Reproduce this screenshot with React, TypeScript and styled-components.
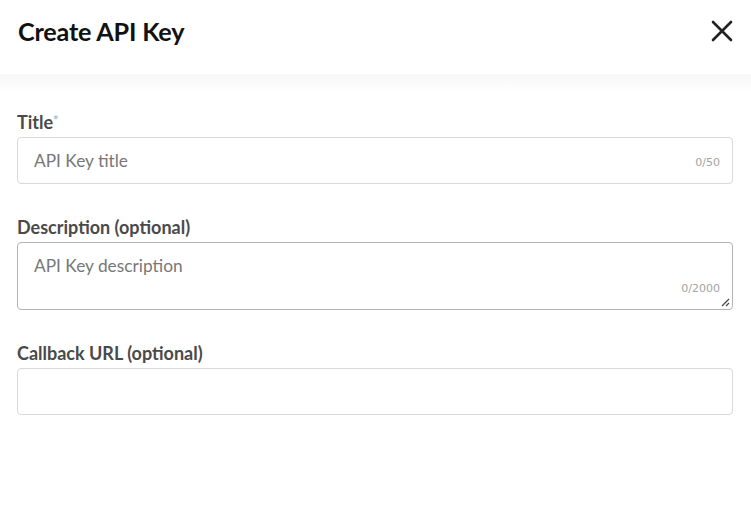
import React from "react";
import styled, { createGlobalStyle } from "styled-components";

const Global = createGlobalStyle`
  html, body { margin: 0; padding: 0; background: #fff; }
  body { font-family: Lato, "Open Sans", sans-serif; }
  * { box-sizing: border-box; }
`;

const Panel = styled.div`
  width: 751px;
  height: 513px;
  background: #fff;
  display: flex;
  flex-direction: column;
`;

const Header = styled.header`
  height: 74px;
  display: flex;
  align-items: center;
  justify-content: space-between;
  padding: 0 17px 0 18px;
  position: relative;
  &::after {
    content: "";
    position: absolute;
    left: 0;
    right: 0;
    top: 74px;
    height: 18px;
    background: linear-gradient(#f7f7f7, #ffffff);
  }
`;

const Heading = styled.h1`
  margin: 0;
  margin-top: -13px;
  font-size: 25.2px;
  font-weight: 700;
  color: #111;
  letter-spacing: -0.2px;
`;

const CloseButton = styled.button`
  border: 0;
  background: transparent;
  padding: 0;
  width: 24px;
  height: 24px;
  margin-top: -13px;
  display: flex;
  align-items: center;
  justify-content: center;
  cursor: pointer;
`;

const Form = styled.form`
  display: flex;
  flex-direction: column;
  gap: 32px;
  padding: 37px 18px 0 17px;
`;

const Field = styled.div`
  display: flex;
  flex-direction: column;
  gap: 4px;
`;

const Label = styled.label`
  font-size: 18px;
  font-weight: 700;
  color: #4a4a4a;
  line-height: 22px;
`;

const Required = styled.span`
  color: #a9b8c4;
  font-size: 13px;
  vertical-align: top;
  position: relative;
  top: -2px;
`;

const Box = styled.div<{ $multi?: boolean; $strong?: boolean }>`
  position: relative;
  height: ${(p) => (p.$multi ? "68px" : "47px")};
  border: 1px solid ${(p) => (p.$strong ? "#b3b3b3" : "#d9d9d9")};
  border-radius: 4px;
  display: flex;
  align-items: ${(p) => (p.$multi ? "flex-start" : "center")};
  padding: ${(p) => (p.$multi ? "13px 16px" : "0 16px")};
`;

const Placeholder = styled.span`
  font-size: 17.3px;
  color: #777;
  line-height: 20px;
`;

const Counter = styled.span`
  position: absolute;
  right: 12px;
  bottom: 14px;
  font-family: "DejaVu Sans", Verdana, sans-serif;
  font-size: 11px;
  color: #a3a3a3;
`;

const Grip = styled.svg`
  position: absolute;
  right: 2px;
  bottom: 2px;
`;

export default function App() {
  return (
    <Panel>
      <Global />
      <Header>
        <Heading>Create API Key</Heading>
        <CloseButton aria-label="Close">
          <svg width="22" height="22" viewBox="0 0 22 22">
            <path d="M2 2L20 20M20 2L2 20" stroke="#222" strokeWidth="2.6" strokeLinecap="round" />
          </svg>
        </CloseButton>
      </Header>
      <Form>
        <Field>
          <Label>
            Title<Required>*</Required>
          </Label>
          <Box>
            <Placeholder>API Key title</Placeholder>
            <Counter>0/50</Counter>
          </Box>
        </Field>
        <Field>
          <Label>Description (optional)</Label>
          <Box $multi $strong>
            <Placeholder>API Key description</Placeholder>
            <Counter>0/2000</Counter>
            <Grip width="9" height="9" viewBox="0 0 9 9">
              <path d="M8 1L1 8M8 5L5 8" stroke="#444" strokeWidth="1.2" />
            </Grip>
          </Box>
        </Field>
        <Field>
          <Label>Callback URL (optional)</Label>
          <Box />
        </Field>
      </Form>
    </Panel>
  );
}
